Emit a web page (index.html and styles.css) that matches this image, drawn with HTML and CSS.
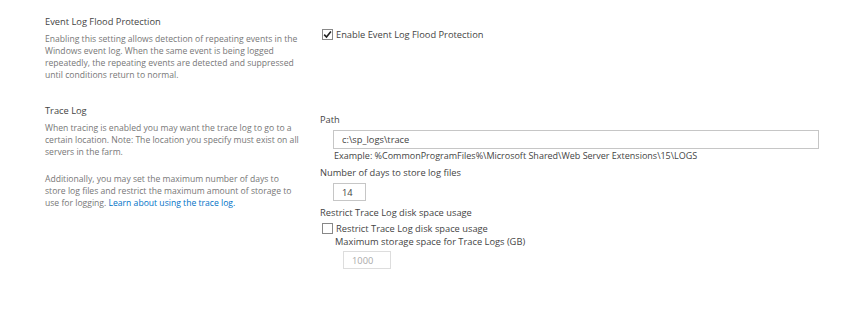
FILE: index.html
```html
<!DOCTYPE html>
<html lang="en">
<head>
<meta charset="UTF-8">
<title>Diagnostic Logging</title>
<link rel="stylesheet" href="styles.css">
</head>
<body>
<div class="settings">
  <div class="section">
    <div class="section-info">
      <h3 class="section-title">Event Log Flood Protection</h3>
      <p class="section-desc">Enabling this setting allows detection of repeating events in the Windows event log. When the same event is being logged repeatedly, the repeating events are detected and suppressed until conditions return to normal.</p>
    </div>
    <div class="section-body flood-body">
      <label class="check-row">
        <span class="check">
          <svg width="9" height="9" viewBox="0 0 9 9"><path d="M1.2 4.6 L3.5 7 L7.9 1.6" fill="none" stroke="#222" stroke-width="1.6"/></svg>
        </span>
        <span>Enable Event Log Flood Protection</span>
      </label>
    </div>
  </div>

  <div class="section trace-section">
    <div class="section-info">
      <h3 class="section-title">Trace Log</h3>
      <p class="section-desc first-para">When tracing is enabled you may want the trace log to go to a certain location. Note: The location you specify must exist on all servers in the farm.</p>
      <p class="section-desc">Additionally, you may set the maximum number of days to store log files and restrict the maximum amount of storage to use for logging. <a href="#">Learn about using the trace log.</a></p>
    </div>
    <div class="section-body trace-body">
      <div class="field-label">Path</div>
      <div class="field">
        <input class="text-input path-input" type="text" value="c:\sp_logs\trace">
        <div class="field-hint">Example: %CommonProgramFiles%\Microsoft Shared\Web Server Extensions\15\LOGS</div>
      </div>
      <div class="field-label">Number of days to store log files</div>
      <div class="field">
        <input class="text-input days-input" type="text" value="14">
      </div>
      <div class="field-label">Restrict Trace Log disk space usage</div>
      <label class="check-row restrict-row">
        <span class="check"></span>
        <span>Restrict Trace Log disk space usage</span>
      </label>
      <div class="sub-field">
        <div class="field-label">Maximum storage space for Trace Logs (GB)</div>
        <input class="text-input size-input" type="text" value="1000" disabled>
      </div>
    </div>
  </div>
</div>
</body>
</html>
```

FILE: styles.css
```css
body {
  margin: 0;
  background: #fff;
  font-family: "Open Sans", "Noto Sans", sans-serif;
  color: #444;
}
.settings {
  padding: 15px 0 0 45px;
}
.section {
  display: flex;
}
.trace-section {
  margin-top: 11px;
}
.section-info {
  width: 275px;
}
.section-title {
  margin: 0 0 5px;
  font-size: 9.3px;
  font-weight: normal;
  color: #444;
  line-height: 13px;
}
.section-desc {
  width: 256px;
  margin: 0 0 12px;
  font-size: 8.6px;
  line-height: 12px;
  color: #777;
}
.first-para {
  margin-bottom: 15px;
}
.section-desc a {
  color: #0072c6;
  text-decoration: none;
}
.section-body {
  font-size: 9.3px;
  color: #444;
}
.flood-body {
  padding-top: 13px;
}
.trace-body {
  padding-top: 9px;
}
.check-row {
  display: flex;
  align-items: center;
  gap: 3px;
  padding-left: 2px;
  line-height: 13px;
}
.check {
  box-sizing: border-box;
  width: 11px;
  height: 11px;
  border: 1px solid #888;
  background: #fff;
  display: flex;
  align-items: center;
  justify-content: center;
}
.check svg {
  display: block;
}
.field-label {
  line-height: 13px;
}
.field {
  padding: 4px 0 4px 13px;
}
.text-input {
  display: block;
  box-sizing: border-box;
  height: 19px;
  border: 1px solid #c6c6c6;
  padding: 0 0 0 8px;
  font-family: inherit;
  font-size: 9.3px;
  color: #444;
  background: #fff;
}
.path-input {
  width: 486px;
}
.field-hint {
  line-height: 13px;
  padding-left: 1px;
  font-size: 9px;
}
.days-input {
  width: 33px;
  height: 18px;
  margin-bottom: 1px;
}
.restrict-row {
  margin-top: 3px;
}
.sub-field {
  padding-left: 15px;
}
.size-input {
  width: 48px;
  height: 18px;
  margin: 3px 0 0 8px;
  color: #aaa;
  border-color: #ddd;
}
```
